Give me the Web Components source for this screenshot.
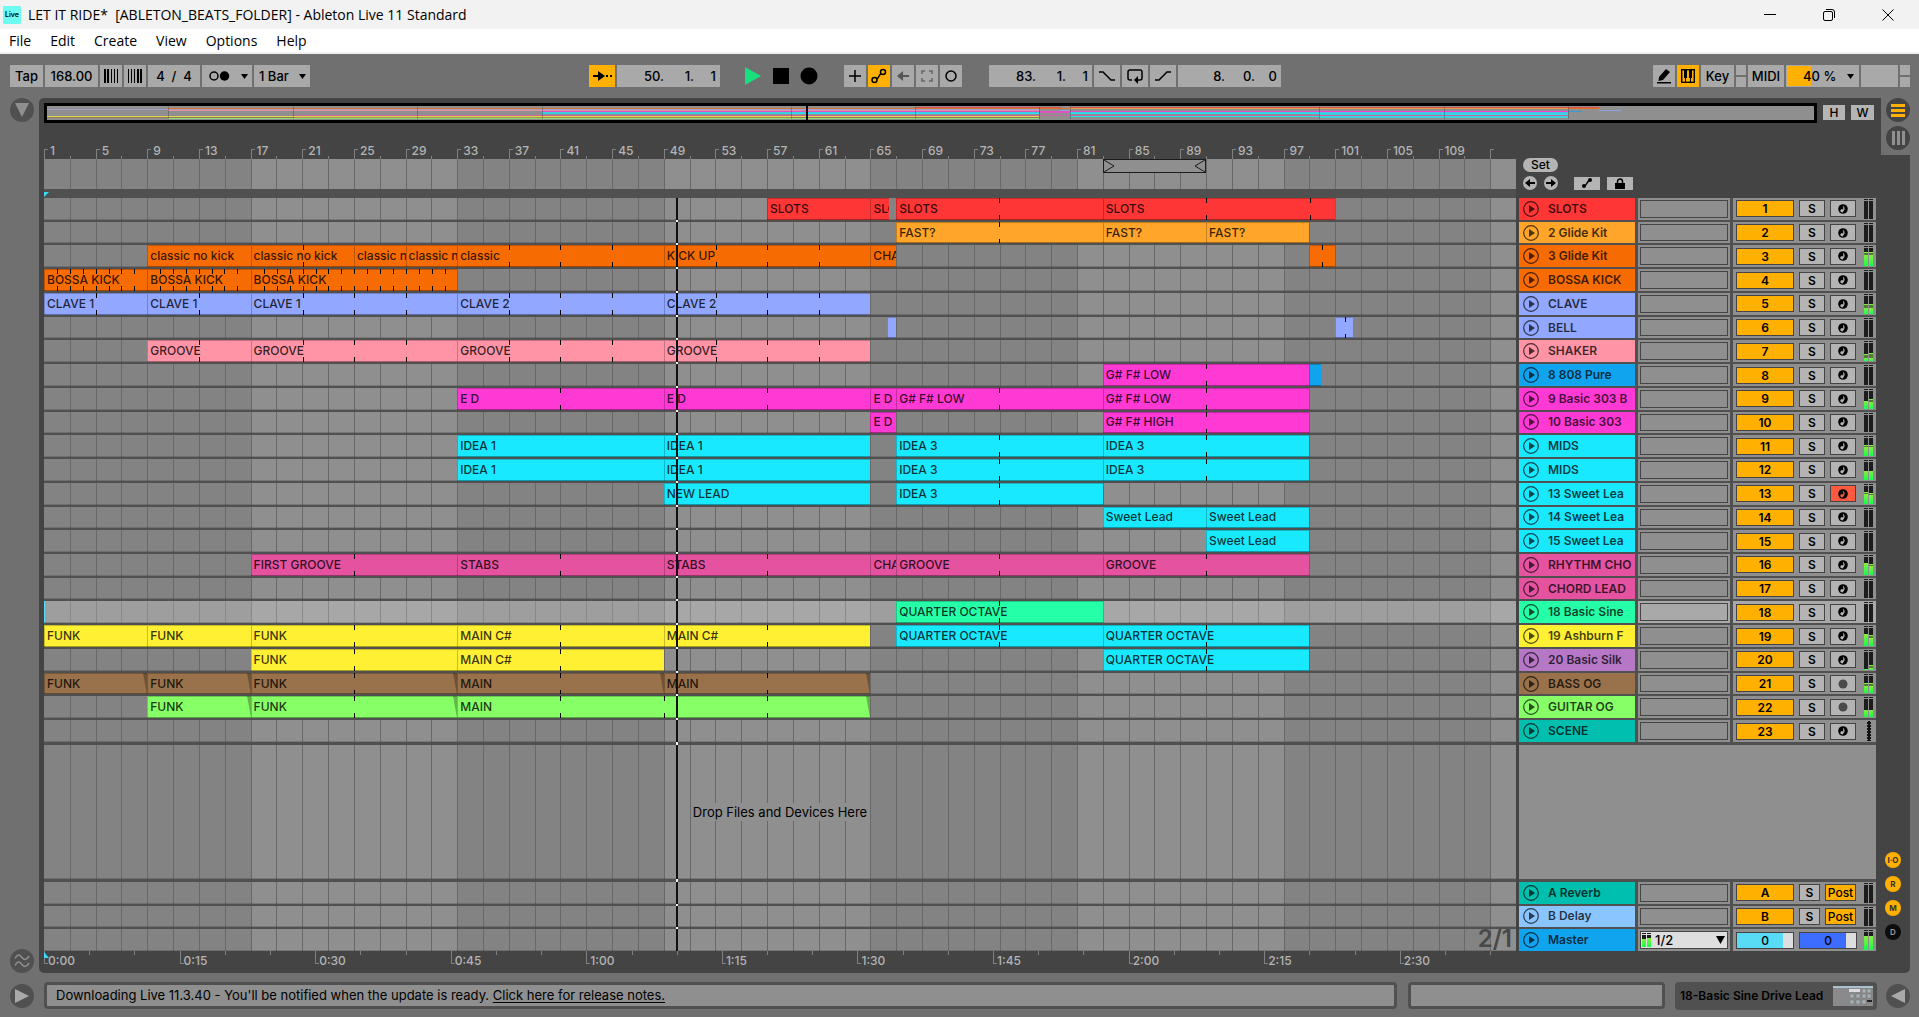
<!DOCTYPE html>
<html lang="en">
<head>
<meta charset="utf-8">
<title>LET IT RIDE* [ABLETON_BEATS_FOLDER] - Ableton Live 11 Standard</title>
<style>
  html, body { height: 100%; margin: 0; }
  body { font: 500 12px/16px Inter, "Liberation Sans", sans-serif; color: #000; background: #707070; }
</style>
</head>
<body>
<live-window></live-window>
<script>
const BARS = 114;
const BAR_SECONDS = 240 / 168;
const PLAYHEAD = 49;
const at = n => (n / BARS * 100) + '%';

const BASE = `
  *, *::before, *::after { box-sizing: border-box; }
  :host { box-sizing: border-box; display: block; }
  :host([hidden]) { display: none; }
  button, input, select { font: inherit; color: inherit; margin: 0; padding: 0; border: 0; border-radius: 0; background: none; min-width: 0; }
  svg { display: block; }
`;

function define(name, css, render) {
  customElements.define(name, class extends HTMLElement {
    connectedCallback() {
      if (this.shadowRoot) return;
      this.attachShadow({ mode: 'open' }).innerHTML = `<style>${BASE}${css}</style>${render(this)}`;
    }
  });
}

const C = {
  red: '#ff3636', amber: '#ffa529', orange: '#f66c03', lav: '#92a7ff', pink: '#ff94a6', blue: '#10a4ee',
  magenta: '#ff39d4', cyan: '#19e9ff', rose: '#e553a0', mint: '#25ffa8', yellow: '#fff034', purple: '#b677c6',
  brown: '#99724b', green: '#87ff67', teal: '#00bfaf', sky: '#8bc5ff'
};

/* Clips are [name, first bar, end bar, loop marks, colour override]. */
const every = (a, b) => Array.from({ length: b - a - 1 }, (_, i) => a + 1 + i);
const TRACKS = [
  { name: 'SLOTS', color: C.red, clips: [['SLOTS', 57, 65], ['SLOTS', 65, 66.45], ['SLOTS', 67, 83, [75]], ['SLOTS', 83, 101, [91, 99]]] },
  { name: '2 Glide Kit', color: C.amber, clips: [['FAST?', 67, 83, [75]], ['FAST?', 83, 91], ['FAST?', 91, 99, [98.95]]] },
  { name: '3 Glide Kit', color: C.orange, level: [.62, .62, .78, .82], clips: [['classic no kick', 9, 17], ['classic no kick', 17, 25, [21]], ['classic no kick', 25, 29], ['classic no kick', 29, 33], ['classic', 33, 49, [37, 41, 45]], ['KICK UP', 49, 65, [53, 57, 61]], ['CHA', 65, 67], ['', 99, 101, [100]]] },
  { name: 'BOSSA KICK', color: C.orange, clips: [['BOSSA KICK', 1, 9, every(1, 9)], ['BOSSA KICK', 9, 17, every(9, 17)], ['BOSSA KICK', 17, 33, every(17, 33)]] },
  { name: 'CLAVE', color: C.lav, level: [.3, .3, .55, .55], clips: [['CLAVE 1', 1, 9, [5]], ['CLAVE 1', 9, 17, [13]], ['CLAVE 1', 17, 33, [21, 25, 29]], ['CLAVE 2', 33, 49, [37, 41, 45]], ['CLAVE 2', 49, 65, [53, 57, 61]]] },
  { name: 'BELL', color: C.lav, clips: [['', 66.3, 67], ['', 101, 102.4, [101.75]]] },
  { name: 'SHAKER', color: C.pink, level: [.15, .2, .4, .45], clips: [['GROOVE', 9, 17, [13]], ['GROOVE', 17, 33, [21, 25, 29]], ['GROOVE', 33, 49, [37, 41, 45]], ['GROOVE', 49, 65, [53, 57, 61]]] },
  { name: '8 808 Pure', color: C.blue, clips: [['G# F# LOW', 83, 99, [91, 98.95], C.magenta], ['', 99, 99.9]] },
  { name: '9 Basic 303 B', color: C.magenta, level: [.45, .4, .45, .52], clips: [['E D', 33, 49, [41]], ['E D', 49, 65, [57]], ['E D', 65, 67], ['G# F# LOW', 67, 83, [75]], ['G# F# LOW', 83, 99, [91, 98.95]]] },
  { name: '10 Basic 303', color: C.magenta, clips: [['E D', 65, 67], ['G# F# HIGH', 83, 99, [91, 98.95]]] },
  { name: 'MIDS', color: C.cyan, level: [.5, .52, .6, .6], clips: [['IDEA 1', 33, 49], ['IDEA 1', 49, 65], ['IDEA 3', 67, 83, [75]], ['IDEA 3', 83, 99, [91, 98.95]]] },
  { name: 'MIDS', color: C.cyan, level: [.5, .5, .5, .5], clips: [['IDEA 1', 33, 49], ['IDEA 1', 49, 65], ['IDEA 3', 67, 83, [75]], ['IDEA 3', 83, 99, [91, 98.95]]] },
  { name: '13 Sweet Lea', color: C.cyan, armed: true, level: [.55, .5, .65, .6], clips: [['NEW LEAD', 49, 65], ['IDEA 3', 67, 83, [75]]] },
  { name: '14 Sweet Lea', color: C.cyan, clips: [['Sweet Lead', 83, 91], ['Sweet Lead', 91, 99]] },
  { name: '15 Sweet Lea', color: C.cyan, clips: [['Sweet Lead', 91, 99]] },
  { name: 'RHYTHM CHO', color: C.rose, level: [.6, .5, .66, .62], clips: [['FIRST GROOVE', 17, 33, [25]], ['STABS', 33, 49, [41]], ['STABS', 49, 65, [57]], ['CHA', 65, 67], ['GROOVE', 67, 83, [75]], ['GROOVE', 83, 99, [91, 98.95]]] },
  { name: 'CHORD LEAD', color: C.rose, clips: [] },
  { name: '18 Basic Sine', color: C.mint, selected: true, clips: [['QUARTER OCTAVE', 67, 83, [75]]] },
  { name: '19 Ashburn F', color: C.yellow, level: [.6, .45, .66, .6], clips: [['FUNK', 1, 9], ['FUNK', 9, 17], ['FUNK', 17, 33, [25]], ['MAIN C#', 33, 49, [41]], ['MAIN C#', 49, 65, [57]], ['QUARTER OCTAVE', 67, 83, [75], C.cyan], ['QUARTER OCTAVE', 83, 99, [91, 98.95], C.cyan]] },
  { name: '20 Basic Silk', color: C.purple, level: [.06, .08, .06, .26], clips: [['FUNK', 17, 33, [25], C.yellow], ['MAIN C#', 33, 49, [41], C.yellow], ['QUARTER OCTAVE', 83, 99, [91, 98.95], C.cyan]] },
  { name: 'BASS OG', color: C.brown, audio: true, level: [.4, .42, .58, .6], clips: [['FUNK', 1, 9], ['FUNK', 9, 17], ['FUNK', 17, 33, [25]], ['MAIN', 33, 49, [41]], ['MAIN', 49, 65, [57]]] },
  { name: 'GUITAR OG', color: C.green, audio: true, level: [.4, .4, .4, .4], clips: [['FUNK', 9, 17], ['FUNK', 17, 33, [25]], ['MAIN', 33, 65, [41, 49, 57]]] },
  { name: 'SCENE', color: C.teal, midi: true, clips: [] }
];
const RETURNS = [{ name: 'A Reverb', id: 'A', color: C.teal }, { name: 'B Delay', id: 'B', color: C.sky }];

/* ---------- window chrome ---------- */
define('title-bar', `
  :host { display: flex; align-items: center; height: 29px; flex: none; background: #f2f2f2; padding: 0 2px 0 3px; font: 400 14px/20px "Open Sans", "Noto Sans", sans-serif; }
  .logo { width: 18px; height: 18px; background: #6ffcf0; font: 600 7px/18px Inter, sans-serif; text-align: center; border-radius: 1px; margin-right: 7px; }
  h1 { font: inherit; margin: 0; flex: 1; white-space: pre; }
  button { width: 59px; height: 29px; display: grid; place-items: center; }
`, () => `
  <span class="logo">Live</span><h1>LET IT RIDE*  [ABLETON_BEATS_FOLDER] - Ableton Live 11 Standard</h1>
  <button aria-label="Minimize"><svg width="12" height="12"><path d="M0 5.500h12" stroke="#000"/></svg></button>
  <button aria-label="Restore"><svg width="12" height="12" fill="none" stroke="#000"><rect x=".5" y="2.500" width="9" height="9" rx="1.500"/><path d="M3 .5h6a2.500 2.500 0 0 1 2.500 2.500v6"/></svg></button>
  <button aria-label="Close"><svg width="12" height="12"><path d="M.5.5l11 11M11.500.5l-11 11" stroke="#000"/></svg></button>
`);

define('menu-bar', `
  :host { display: flex; align-items: center; height: 25px; flex: none; background: #fff; border-bottom: 2px solid #f0f0f0; padding: 1px 0 0 9px; gap: 19px; font: 400 14px/20px "Open Sans", "Noto Sans", sans-serif; }
`, () => ['File', 'Edit', 'Create', 'View', 'Options', 'Help'].map(t => `<button>${t}</button>`).join(''));

/* ---------- transport ---------- */
const ARROW = '<svg class="arrow" width="7" height="5"><path d="M0 0h7l-3.500 5z"/></svg>';

define('position-field', `
  :host { display: flex; justify-content: flex-end; align-items: center; height: 22px; background: #a9a9a9; padding-right: 4px; font-size: 13px; }
  input { width: 30px; text-align: right; }
  input:last-child { width: 22px; }
`, el => el.getAttribute('value').split(' ').map((v, i) => `<input value="${v}" aria-label="${el.getAttribute('label')} ${['bars', 'beats', 'sixteenths'][i]}">`).join(''));

define('transport-bar', `
  :host { display: flex; align-items: center; height: 44px; flex: none; padding: 0 9px 0 10px; background: #707070; font-size: 13px; }
  .g { display: flex; gap: 2px; }
  .s3 { flex: 3; } .s4 { flex: 4; }
  button, input, select, .combo, .cpu { height: 22px; background: #a9a9a9; text-align: center; }
  button { display: grid; place-items: center; width: 26px; flex: none; }
  .n { width: 22px; }
  .on { background: #ffb000; }
  .bare { background: none; }
  .combo, .cpu { position: relative; display: flex; align-items: center; }
  .combo select { appearance: none; width: 100%; padding-left: 5px; text-align: left; background: none; }
  .arrow { position: absolute; right: 4px; pointer-events: none; }
  .mini { display: grid; gap: 2px; width: 10px; height: 22px; } .mini i { background: #a9a9a9; }
  .cpu { width: 73px; padding-left: 16px; background: linear-gradient(90deg, #ffb000 24px, #a9a9a9 24px); border: 1px solid #a9a9a9; }
  .blank { width: 37px; background: #a9a9a9; }
`, () => `
  <div class="g">
    <button style="width:33px">Tap</button>
    <input style="width:53px" value="168.00" aria-label="Tempo">
    <button class="n" aria-label="Nudge down"><svg width="14" height="14" stroke="#000"><path d="M1 0v14" stroke-width="2"/><path d="M4 0v14" stroke-width="2"/><path d="M7.500 0v14M10.500 0v14M13.500 0v14"/></svg></button>
    <button class="n" aria-label="Nudge up"><svg width="14" height="14" stroke="#000"><path d="M.5 0v14M3.500 0v14M6.500 0v14"/><path d="M10 0v14M13 0v14" stroke-width="2"/></svg></button>
    <input style="width:52px;white-space:pre" value="4  /  4" aria-label="Time signature">
    <button style="width:50px" class="combo" aria-label="Metronome"><svg width="50" height="22"><circle cx="12" cy="11" r="4" fill="none" stroke="#000" stroke-width="1.500"/><circle cx="22.500" cy="11" r="4.700"/></svg><svg class="arrow" width="7" height="5"><path d="M0 0h7l-3.500 5z"/></svg></button>
    <span class="combo" style="width:56px"><select aria-label="Quantization"><option>1 Bar</option></select>${ARROW}</span>
  </div>
  <span class="s3"></span>
  <div class="g">
    <button class="on" aria-label="Follow"><svg width="20" height="10"><path d="M1 5h7" stroke="#000" stroke-width="2"/><path d="M6 0l7 5-7 5z"/><path d="M14 4h2v2h-2zM18 4h2v2h-2z"/></svg></button>
    <position-field style="width:103px" value="50. 1. 1" label="Arrangement position"></position-field>
  </div>
  <div class="g" style="margin:0 22px 0 20px">
    <button class="bare" aria-label="Play"><svg width="18" height="18"><path d="M1 0l16 9-16 9z" fill="#18e07c"/></svg></button>
    <button class="bare" aria-label="Stop"><svg width="16" height="16"><path d="M0 0h16v16H0z"/></svg></button>
    <button class="bare" aria-label="Record"><svg width="18" height="18"><circle cx="9" cy="9" r="8.500"/></svg></button>
  </div>
  <div class="g">
    <button class="n" aria-label="Overdub"><svg width="12" height="12"><path d="M6 0v12M0 6h12" stroke="#000" stroke-width="1.500"/></svg></button>
    <button class="n on" aria-label="Automation arm"><svg width="16" height="16" fill="none" stroke="#000" stroke-width="1.500"><circle cx="3.500" cy="12" r="2.500"/><circle cx="12" cy="4" r="2.500"/><path d="M5.500 10.500c3 0 2-4 4.500-4.500"/></svg></button>
    <button class="n" aria-label="Re-enable automation"><svg width="12" height="10" fill="#555" stroke="#555"><path d="M4 5h8" stroke-width="2"/><path d="M0 5l6-5v10z" stroke="none"/></svg></button>
    <button class="n" aria-label="Capture"><svg width="12" height="12" fill="none" stroke="#666" stroke-width="1.500"><path d="M1 4V1h3M8 1h3v3M11 8v3H8M4 11H1V8"/></svg></button>
    <button class="n" aria-label="Session record"><svg width="14" height="14"><circle cx="7" cy="7" r="5" fill="none" stroke="#000" stroke-width="1.500"/></svg></button>
  </div>
  <div class="g" style="margin-left:27px">
    <position-field style="width:103px" value="83. 1. 1" label="Loop start"></position-field>
    <button aria-label="Punch in"><svg width="18" height="12" fill="none" stroke="#000" stroke-width="1.500"><path d="M1 2h4l8 8h4"/></svg></button>
    <button aria-label="Loop"><svg width="18" height="16" fill="none" stroke="#000" stroke-width="1.500"><path d="M6 12H4a2 2 0 0 1-2-2V4a2 2 0 0 1 2-2h10a2 2 0 0 1 2 2v6a2 2 0 0 1-2 2h-3"/><path d="M12 8l-4 4 4 4z" fill="#000" stroke="none"/></svg></button>
    <button aria-label="Punch out"><svg width="18" height="12" fill="none" stroke="#000" stroke-width="1.500"><path d="M1 10h4l8-8h4"/></svg></button>
    <position-field style="width:103px" value="8. 0. 0" label="Loop length"></position-field>
  </div>
  <span class="s4"></span>
  <div class="g">
    <button class="n" aria-label="Draw mode"><svg width="16" height="16"><path d="M3 9l7-8 4 3-7 8-4.500 1zM1 14h14v1.500H1z"/></svg></button>
    <button class="n on" aria-label="Computer MIDI keyboard"><svg width="14" height="14"><rect x=".7" y=".7" width="12.600" height="12.600" fill="none" stroke="#000" stroke-width="1.400"/><path d="M3 1h3v8H3zM8 1h3v8H8z"/><path d="M4.500 9v4M9.500 9v4" stroke="#000"/></svg></button>
    <button style="width:33px">Key</button><span class="mini"><i></i><i></i></span>
    <button style="width:36px">MIDI</button>
    <span class="cpu">40 %${ARROW}</span><span class="blank"></span><span class="mini"><i></i><i></i></span>
  </div>
`);

/* ---------- timeline pieces ---------- */
const gridSvg = (() => {
  let s = '';
  for (let b = 16; b < BARS; b += 32) s += `<rect x="${at(b)}" width="${at(Math.min(16, BARS - b))}" height="100%" fill="#8f8f8f"/>`;
  s += `<rect x="${at(112)}" width="${at(2)}" height="100%" fill="#8f8f8f"/>`;
  for (let b = 2; b < BARS; b += 2) s += `<rect x="${at(b)}" width="1" height="100%" fill="#686868"/>`;
  return `<svg width="100%" height="100%" shape-rendering="crispEdges">${s}</svg>`;
})();

define('beat-grid', `
  :host { background: #838383; }
  svg { width: 100%; height: 100%; }
`, () => gridSvg);

define('song-overview', `
  :host { border: 3px solid #000; height: 20px; background: #8f8f8f; padding: 1px 0; overflow: hidden; }
  svg { margin: 0 -3px; width: calc(100% + 6px); height: 12px; overflow: visible; }
`, () => {
  const row = .5;
  let s = '';
  TRACKS.forEach((t, i) => t.clips.forEach(c => {
    s += `<rect x="${at(c[1] - 1)}" y="${i * row}" width="${at(c[2] - c[1])}" height="1" fill="${c[4] || t.color}" opacity=".72"/>`;
  }));
  [8, 16, 24, 32, 48, 56, 64, 66, 82, 90, 98].forEach(b => s += `<rect x="${at(b)}" width="1" height="12" fill="#000" opacity=".22"/>`);
  s += `<rect x="${at(PLAYHEAD)}" y="-1" width="2" height="14"/>`;
  return `<svg shape-rendering="crispEdges" aria-label="Arrangement overview">${s}</svg>`;
});

define('bar-ruler', `
  :host { position: relative; height: 36px; color: #b4b4b4; overflow: hidden; }
  span { position: absolute; bottom: 0; height: 10px; border-left: 1px solid #808080; }
  span.major::before { content: ""; position: absolute; left: 0; top: 0; width: 3px; border-top: 1px solid #808080; }
  span.minor { height: 3px; }
  b { position: absolute; left: 5px; bottom: 0; font-weight: 500; }
`, () => {
  let s = '';
  for (let b = 0; b <= 112; b += 2) {
    const major = b % 4 === 0;
    s += `<span class="${major ? 'major' : 'minor'}" style="left:${at(b)}">${major && b < 112 ? `<b>${b + 1}</b>` : ''}</span>`;
  }
  return s;
});

define('loop-brace', `
  :host { position: absolute; top: 0; height: 14px; background: #8f8f8f; border: 1px solid #1c1c1c; display: flex; justify-content: space-between; }
`, () => `
  <svg width="11" height="12" fill="none" stroke="#1c1c1c"><path d="M0 0l10 6-10 6"/></svg>
  <svg width="11" height="12" fill="none" stroke="#1c1c1c"><path d="M11 0L1 6l10 6"/></svg>
`);

define('clip-item', `
  :host { flex: none; position: relative; overflow: hidden; white-space: pre; display: flex; align-items: center; padding-left: 3px; color: rgba(0,0,0,.8); box-shadow: inset 1px 1px rgba(0,0,0,.22), inset 0 -1px rgba(0,0,0,.22); }
  svg { position: absolute; inset: 0; width: 100%; height: 100%; }
  .fade { left: auto; right: 0; width: 4px; }
`, el => {
  const marks = (el.getAttribute('marks') || '').split(',').filter(Boolean);
  return `<span>${el.getAttribute('label')}</span>
  <svg shape-rendering="crispEdges">${marks.map(m => `<rect x="${m}%" width="1" height="5"/><rect x="${m}%" y="100%" width="1" height="5" transform="translate(0 -5)"/>`).join('')}</svg>
  ${el.hasAttribute('fade') ? '<svg class="fade" viewBox="0 0 4 22" preserveAspectRatio="none"><path d="M0 0h4v22z" fill="rgba(0,0,0,.28)"/></svg>' : ''}`;
});

define('track-lane', `
  :host { position: relative; flex: 1 1 0; min-height: 0; display: flex; }
  :host([tall]) { flex: 0 0 134px; margin: 1px 0; }
  :host::after { content: ""; position: absolute; inset: auto 0 0; z-index: 3; height: 1px; background: rgba(0,0,0,.16); }
  beat-grid { position: absolute; inset: 0; }
  :host([selected])::before { content: ""; position: absolute; inset: 0; z-index: 1; background: rgba(255,255,255,.22); border-left: 1px solid #58dcf5; }
  .clips { position: relative; z-index: 2; flex: 1; min-width: 0; display: flex; }
  .head { position: absolute; z-index: 3; top: 0; bottom: 0; left: calc(${at(PLAYHEAD)} - 1px); width: 2px; background: #111; }
  ::slotted(*) { position: relative; z-index: 2; margin: auto; }
`, el => {
  const t = TRACKS[el.getAttribute('track')] || { clips: [] };
  let pos = 1;
  const clips = t.clips.map(([label, a, b, marks = [], color]) => {
    const gap = a - pos; pos = b;
    const m = marks.map(x => (x - a) / (b - a) * 100).join();
    return `<clip-item label="${label}" marks="${m}" ${t.audio ? 'fade' : ''} style="margin-left:${at(gap)};width:${at(b - a)};background-color:${color || t.color}"></clip-item>`;
  }).join('');
  return `<beat-grid></beat-grid>${clips ? `<div class="clips">${clips}</div>` : ''}<slot></slot><i class="head"></i>`;
});

define('time-ruler', `
  :host { position: relative; height: 22px; color: #b4b4b4; overflow: hidden; }
  span { position: absolute; top: 0; height: 13px; border-left: 1px solid #808080; }
  span.major::before { content: ""; position: absolute; left: 0; bottom: 0; width: 3px; border-top: 1px solid #808080; }
  span.minor { height: 4px; }
  b { position: absolute; left: 3px; top: 2px; font-weight: 500; }
  svg { position: absolute; left: 0; top: 1px; }
`, () => {
  let s = '';
  for (let t = 0; t <= 160; t += 5) {
    const major = t % 15 === 0;
    s += `<span class="${major ? 'major' : 'minor'}" style="left:${at(t / BAR_SECONDS)}">${major ? `<b>${Math.floor(t / 60)}:${String(t % 60).padStart(2, '0')}</b>` : ''}</span>`;
  }
  return s + '<svg width="5" height="6"><path d="M0 0l5 6H0z" fill="#40d8f8"/></svg>';
});

/* ---------- track headers ---------- */
define('level-meter', `
  :host { width: 9px; display: flex; gap: 1px; align-self: stretch; padding: 1px 0; }
  .ch { flex: 1; display: flex; flex-direction: column; gap: 1px; }
  .clip { height: 1px; background: #1c1c1c; }
  .bar { flex: 1; position: relative; background: #1c1c1c; }
  .hold, .now { position: absolute; left: 0; right: 0; bottom: 0; }
  .hold { background: #567a35; border-top: 1px solid #7cf03c; }
  .now { background: linear-gradient(0deg, #12ff4a, #86ee3e); }
  .dots { width: 4px; margin: auto; height: 100%; background: radial-gradient(circle at 2px 2px, #111 2px, transparent 2px) 0 0 / 4px 3px; }
`, el => {
  if (el.hasAttribute('midi')) return '<div class="dots"></div>';
  const v = (el.getAttribute('level') || '').split(',').filter(Boolean);
  const ch = i => `<div class="ch"><i class="clip"></i><div class="bar">${v.length ? `<i class="hold" style="height:${v[i + 2] * 100}%"></i><i class="now" style="height:${v[i] * 100}%"></i>` : ''}</div></div>`;
  return ch(0) + ch(1);
});

const NOTE = '<svg width="12" height="12"><circle cx="6" cy="6" r="4.800"/><path d="M6.200 2.500v4.300a1.600 1.600 0 1 0 .2 1.500c1.300-1.300 2-3.200-.2-5.800z" fill="currentColor" stroke="none"/></svg>';
define('track-header', `
  :host { display: flex; flex: 1 1 0; min-height: 0; gap: 3px; --bg: #8f8f8f; }
  :host([selected]) { --bg: #a9a9a9; }
  .name { width: 116px; display: flex; align-items: center; gap: 9px; padding-left: 4px; background: var(--c); color: rgba(0,0,0,.75); font-weight: 600; white-space: nowrap; overflow: hidden; }
  .name button { flex: none; }
  .io { width: 92px; padding: 2px; background: var(--bg); display: flex; }
  .io > span, .io select { flex: 1; border: 1px solid #444; }
  .io .cue { display: flex; position: relative; background: #dedede; align-items: center; }
  .io .cue level-meter { flex: none; width: 9px; margin-left: 1px; }
  .io .cue select { border: 0; appearance: none; padding-left: 4px; font-size: 13px; align-self: stretch; }
  .io svg { position: absolute; right: 2px; pointer-events: none; }
  .mix { flex: 1; display: flex; align-items: center; background: var(--bg); padding: 0 3px; gap: 5px; }
  .mix > button, .mix > input { height: 17px; line-height: 15px; border: 1px solid #444; background: #b4b4b4; text-align: center; display: grid; place-items: center; flex: none; }
  .mix > .num { width: 58px; background: #ffb000; font-weight: 600; }
  .s { width: 26px; font-weight: 600; }
  .arm { width: 26px; color: #b4b4b4; }
  .mix > .armed { background: #ff5a40; color: #ff5a40; }
  .mix > .post { width: 31px; background: #ffb000; }
  :host([kind=return]) .s { width: 21px; }
  .mix > .vol { width: 58px; display: block; } .mix > .cy { background: linear-gradient(90deg, #58dcf5 83%, #dedede 83%); } .mix > .bl { background: linear-gradient(90deg, #3d6dff 83%, #dedede 83%); }
  level-meter { margin-left: auto; }
`, el => {
  const a = n => el.getAttribute(n), kind = a('kind');
  const level = a('level') ? `level="${a('level')}"` : '';
  let mix;
  if (kind === 'master') mix = `<input class="vol cy" value="0" aria-label="Master volume"><input class="vol bl" value="0" aria-label="Cue volume">`;
  else {
    mix = `<button class="num" aria-label="Track activator">${a('num')}</button><button class="s" aria-label="Solo">S</button>`;
    mix += kind === 'return' ? '<button class="post">Post</button>'
      : `<button class="arm ${el.hasAttribute('armed') ? 'armed' : ''}" aria-label="Arm">${el.hasAttribute('audio') ? '<svg width="12" height="12"><circle cx="6" cy="6" r="4.500" fill="#4a4a4a"/></svg>' : NOTE}</button>`;
  }
  return `<div class="name" style="--c:${a('color')}"><button aria-label="Unfold track"><svg width="16" height="16"><circle cx="8" cy="8" r="7.300" fill="none" stroke="rgba(0,0,0,.7)" stroke-width="1.200"/><path d="M6 4l6 4-6 4z" fill="rgba(0,0,0,.7)"/></svg></button><span>${a('label')}</span></div>
  <div class="io">${kind === 'master' ? '<span class="cue"><level-meter level=".7,.8,.7,.8"></level-meter><select aria-label="Master out"><option>1/2</option></select><svg width="9" height="8"><path d="M0 0h9l-4.500 8z"/></svg></span>' : '<span></span>'}</div>
  <div class="mix">${mix}<level-meter ${level} ${el.hasAttribute('midi') ? 'midi' : ''}></level-meter></div>`;
});

/* ---------- arrangement ---------- */
define('arrangement-view', `
  :host { flex: 1; min-height: 0; display: flex; flex-direction: column; background: #444; border-radius: 5px 0 5px 5px; padding-left: 5px; }
  .top { display: flex; flex: none; align-items: flex-start; }
  .inner { flex: 1; min-width: 0; padding-top: 5px; }
  .ov { display: flex; gap: 6px; padding-right: 7px; }
  song-overview { flex: 1; }
  .ov button { width: 22px; height: 15px; margin-top: 2px; background: #b4b4b4; line-height: 15px; }
  .ov button:last-child { width: 23px; }
  .head { display: flex; gap: 3px; }
  .rulers { flex: 1; min-width: 0; }
  .scrub { height: 30px; position: relative; }
  .scrub beat-grid { height: 100%; }
  .loc { height: 9px; background: #505050; }
  .set { width: 362px; padding: 35px 0 0 4px; }
  .set > button { display: block; width: 35px; height: 14px; line-height: 14px; border-radius: 7px; background: #b4b4b4; }
  .tools { display: flex; align-items: center; margin-top: 4px; gap: 7px; }
  .tools button { width: 26px; height: 13px; background: #b4b4b4; display: grid; place-items: center; }
  .tools .r { width: 14px; height: 14px; border-radius: 7px; }
  .tools .r + .r { margin-right: 9px; }
  .notch { flex: none; width: 29px; height: 57px; background: #707070; display: flex; flex-direction: column; align-items: flex-end; gap: 4px; }
  .disc { width: 24px; height: 24px; border-radius: 50%; background: #444; display: grid; place-items: center; }
  .body { display: flex; flex: 1; min-height: 0; gap: 3px; }
  .col { display: flex; flex-direction: column; gap: 2px; min-height: 0; background: #505050; }
  .lanes { flex: 1; min-width: 0; position: relative; }
  .lanes > .gapline { position: absolute; top: 0; bottom: 0; left: calc(${at(PLAYHEAD)} - 1px); width: 2px; background: #f4f4f4; }
  .zoomtxt { position: absolute; z-index: 4; right: 4px; bottom: 0; color: #484848; font: 600 24px/24px Inter, sans-serif; }
  .drop { background: #8f8f8f; font-size: 13px; font-weight: 400; line-height: 18px; }
  .heads { flex: none; width: 357px; }
  .heads .space { flex: 0 0 134px; margin: 1px 0; background: #8f8f8f; }
  .rail { flex: none; width: 31px; display: flex; flex-direction: column; justify-content: flex-end; align-items: center; gap: 8px; padding: 0 3px 11px 0; }
  .rail button { width: 16px; height: 16px; border-radius: 50%; background: #ffb000; color: #333; font: 700 8px/16px Inter, sans-serif; }
  .rail .off { background: #0c0c0c; color: #8f8f8f; }
  .foot { flex: none; padding-right: 394px; }
`, () => `
  <div class="top">
    <div class="inner">
      <div class="ov"><song-overview></song-overview><button>H</button><button>W</button></div>
      <div class="head">
        <div class="rulers"><bar-ruler></bar-ruler>
          <div class="scrub"><beat-grid></beat-grid><loop-brace style="left:${at(82)};width:${at(8)}"></loop-brace></div>
          <div class="loc"><svg width="5" height="9"><path d="M0 3h5l-5 5z" fill="#40d8f8"/></svg></div></div>
        <div class="set"><button>Set</button>
          <div class="tools">
            <button class="r" aria-label="Previous locator"><svg width="10" height="8"><path d="M3 4h7" stroke="#000" stroke-width="2"/><path d="M0 4l5-4v8z"/></svg></button>
            <button class="r" aria-label="Next locator"><svg width="10" height="8"><path d="M0 4h7" stroke="#000" stroke-width="2"/><path d="M10 4L5 0v8z"/></svg></button>
            <button aria-label="Automation mode"><svg width="12" height="10"><circle cx="3" cy="8" r="2"/><circle cx="9" cy="2" r="2"/><path d="M3 8c3 0 2-4 6-6" fill="none" stroke="#000" stroke-width="1.500"/></svg></button>
            <button aria-label="Lock envelopes"><svg width="10" height="11"><path d="M0 5h10v6H0z"/><path d="M2.500 5V3.500a2.500 2.500 0 0 1 5 0V5" fill="none" stroke="#000" stroke-width="1.500"/></svg></button>
          </div></div>
      </div>
    </div>
    <div class="notch">
      <button class="disc" aria-label="Arrangement view"><svg width="14" height="13" fill="#ffb000"><path d="M0 0h14v3H0zM0 5h14v3H0zM0 10h14v3H0z"/></svg></button>
      <button class="disc" aria-label="Session view"><svg width="13" height="14" fill="#8f8f8f"><path d="M0 0h3v14H0zM5 0h3v14H5zM10 0h3v14h-3z"/></svg></button>
    </div>
  </div>
  <div class="body">
    <div class="col lanes"><i class="gapline"></i>
      ${TRACKS.map((t, i) => `<track-lane track="${i}" ${t.selected ? 'selected' : ''}></track-lane>`).join('')}
      <track-lane tall><span class="drop">Drop Files and Devices Here</span></track-lane>
      <track-lane></track-lane><track-lane></track-lane><track-lane></track-lane>
      <span class="zoomtxt">2/1</span>
    </div>
    <div class="col heads">
      ${TRACKS.map((t, i) => `<track-header label="${t.name}" num="${i + 1}" color="${t.color}" ${t.level ? `level="${t.level}"` : ''} ${['selected', 'armed', 'audio', 'midi'].filter(k => t[k]).join(' ')}></track-header>`).join('')}
      <div class="space"></div>
      ${RETURNS.map(t => `<track-header kind="return" label="${t.name}" num="${t.id}" color="${t.color}"></track-header>`).join('')}
      <track-header kind="master" label="Master" color="${C.blue}" level=".72,.75,.8,.82"></track-header>
    </div>
    <div class="rail"><button aria-label="Show I/O">I·O</button><button aria-label="Show returns">R</button><button aria-label="Show mixer">M</button><button class="off" aria-label="Show delays">D</button></div>
  </div>
  <div class="foot"><time-ruler></time-ruler></div>
`);

define('side-rail', `
  :host { width: 39px; flex: none; display: flex; flex-direction: column; justify-content: space-between; align-items: flex-end; padding-right: 5px; }
  button { width: 24px; height: 24px; border-radius: 50%; background: #505050; display: grid; place-items: center; }
`, () => `
  <button aria-label="Show browser"><svg width="14" height="14"><path d="M0 0h14L7 14z" fill="#8f8f8f"/></svg></button>
  <button aria-label="Groove pool"><svg width="16" height="14" fill="none" stroke="#8f8f8f" stroke-width="1.500"><path d="M1 4.500C4-1 6 1 8 3.500S12 7 15 2M1 11.500C4 6 6 8 8 10.500s4 3.500 7-1.500"/></svg></button>
`);

define('status-bar', `
  :host { display: flex; align-items: center; height: 44px; flex: none; padding: 1px 9px 0 10px; font-size: 12px; }
  .disc { width: 24px; height: 24px; border-radius: 50%; background: #505050; display: grid; place-items: center; flex: none; }
  .box { height: 27px; border: 3px solid #505050; border-radius: 4px; background: #8f8f8f; line-height: 21px; }
  .msg { flex: 1; margin: 0 11px 0 10px; padding-left: 9px; font-size: 13px; font-weight: 400; white-space: nowrap; overflow: hidden; }
  a { color: inherit; text-underline-offset: 2px; }
  .info { width: 257px; margin-right: 10px; }
  .dev { width: 202px; height: 28px; border-radius: 4px; background: #505050; display: flex; align-items: center; justify-content: space-between; padding: 0 4px 0 5px; margin-right: 9px; white-space: nowrap; font-weight: 600; }
`, () => `
  <button class="disc" aria-label="Info view"><svg width="14" height="14"><path d="M0 0l14 7-14 7z" fill="#a9a9a9"/></svg></button>
  <div class="box msg">Downloading Live 11.3.40 - You'll be notified when the update is ready. <a href="#notes">Click here for release notes.</a></div>
  <div class="box info"></div>
  <div class="dev"><span>18-Basic Sine Drive Lead</span>
    <svg width="40" height="20"><path d="M0 0h40v20H0z" fill="#8a8a8a"/><path d="M0 0h40v2H0z" fill="#a9c2cf"/><path d="M16 3h11v3H16z" fill="#ddd"/>
      <g fill="#a4b0b6" stroke="#777" stroke-width=".5"><path d="M17 8h4v4h-4zM23 8h4v4h-4zM29 3h4v4h-4zM34 3h4v4h-4zM29 8h4v4h-4zM34 8h4v4h-4zM17 14h4v4h-4zM23 14h4v4h-4zM29 14h4v4h-4z"/></g><path d="M34 14h5v2h-5z" fill="#222"/></svg></div>
  <button class="disc" aria-label="Hide detail view"><svg width="14" height="14"><path d="M14 0L0 7l14 7z" fill="#a9a9a9"/></svg></button>
`);

define('live-window', `
  :host { display: flex; flex-direction: column; height: 100vh; min-height: 700px; min-width: 1280px; overflow: hidden; }
  main { flex: 1; min-height: 0; display: flex; padding-right: 9px; }
`, () => `
  <title-bar></title-bar><menu-bar></menu-bar><transport-bar></transport-bar>
  <main><side-rail></side-rail><arrangement-view></arrangement-view></main>
  <status-bar></status-bar>
`);
</script>
</body>
</html>
